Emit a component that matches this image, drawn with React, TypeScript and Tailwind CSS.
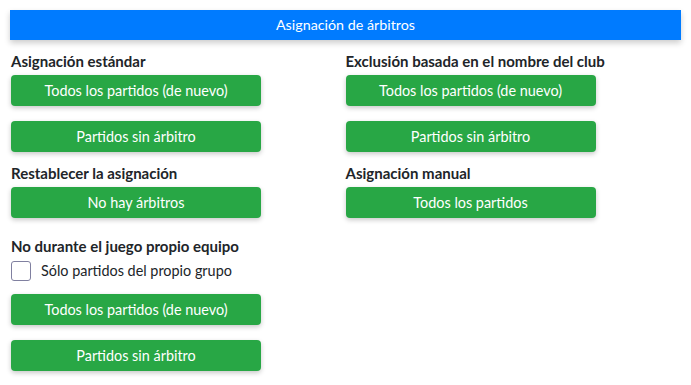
import { useState } from "react";

const font = { fontFamily: "Lato, 'Noto Sans', sans-serif" };

const Btn = ({ label, className = "" }: { label: string; className?: string }) => (
  <button
    className={`w-[250px] h-[31px] rounded-[4px] bg-[#28a745] text-white text-[14.4px] shadow-[0_2px_5px_rgba(0,0,0,0.22)] flex items-center justify-center ${className}`}
  >
    {label}
  </button>
);

const Label = ({ text, className = "" }: { text: string; className?: string }) => (
  <div className={`h-[20px] leading-[20px] text-[15px] font-bold text-[#212529] ${className}`}>{text}</div>
);

export default function App() {
  const [own, setOwn] = useState(false);

  return (
    <div className="w-[691px] h-[385px] bg-white px-[10px] pt-[10px]" style={font}>
      <div className="h-[30px] bg-[#007bff] text-white text-[14.3px] flex items-center justify-center shadow-[0_3px_6px_rgba(0,0,0,0.2)]">
        Asignación de árbitros
      </div>

      <div className="pl-[1px] pr-[1px]">
        <div className="grid grid-cols-2">
          <div className="flex flex-col">
            <Label text="Asignación estándar" className="mt-[11px] mb-[4px]" />
            <Btn label="Todos los partidos (de nuevo)" />
            <Btn label="Partidos sin árbitro" className="mt-[15px]" />
            <Label text="Restablecer la asignación" className="mt-[11px] mb-[4px]" />
            <Btn label="No hay árbitros" />
          </div>
          <div className="flex flex-col">
            <Label text="Exclusión basada en el nombre del club" className="mt-[11px] mb-[4px]" />
            <Btn label="Todos los partidos (de nuevo)" />
            <Btn label="Partidos sin árbitro" className="mt-[15px]" />
            <Label text="Asignación manual" className="mt-[11px] mb-[4px]" />
            <Btn label="Todos los partidos" />
          </div>
        </div>

        <div className="flex flex-col">
          <Label text="No durante el juego propio equipo" className="mt-[18px] mb-[4px]" />
          <label className="flex items-center gap-[10px] h-[21px] text-[14.4px] text-[#212529]">
            <input
              type="checkbox"
              checked={own}
              onChange={(e) => setOwn(e.target.checked)}
              className="appearance-none w-[20px] h-[20px] border border-[#8080a0] rounded-[3px] bg-white"
            />
            Sólo partidos del propio grupo
          </label>
          <Btn label="Todos los partidos (de nuevo)" className="mt-[13px]" />
          <Btn label="Partidos sin árbitro" className="mt-[15px]" />
        </div>
      </div>
    </div>
  );
}
